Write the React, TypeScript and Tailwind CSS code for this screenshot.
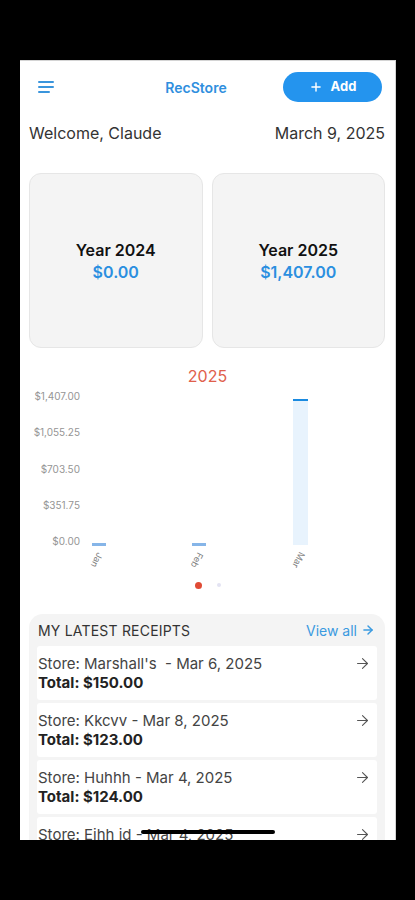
import React from 'react';
import { ArrowRight, Plus } from 'lucide-react';

const yLabels = ['$1,407.00', '$1,055.25', '$703.50', '$351.75', '$0.00'];

const months = [
  { label: 'Jan', value: 0 },
  { label: 'Feb', value: 0 },
  { label: 'Mar', value: 1407 },
];

const receipts = [
  { store: "Marshall's ", date: 'Mar 6, 2025', total: '$150.00' },
  { store: 'Kkcvv', date: 'Mar 8, 2025', total: '$123.00' },
  { store: 'Huhhh', date: 'Mar 4, 2025', total: '$124.00' },
  { store: 'Ejhh jd', date: 'Mar 4, 2025', total: '$98.00' },
];

const MenuIcon = () => (
  <svg width="16" height="14" viewBox="0 0 16 14" fill="none" stroke="#3a95dc" strokeWidth="2" strokeLinecap="round">
    <line x1="1" y1="2" x2="15" y2="2" />
    <line x1="1" y1="7" x2="15" y2="7" />
    <line x1="1" y1="12" x2="11" y2="12" />
  </svg>
);

const YearCard = ({ year, amount }: { year: string; amount: string }) => (
  <div className="flex-1 h-[175px] bg-[#f4f4f4] border border-[#e6e6e6] rounded-[12px] flex flex-col items-center justify-center">
    <div className="text-[16px] leading-[22px] font-semibold text-[#111]">Year {year}</div>
    <div className="text-[16px] leading-[22px] font-semibold text-[#2b8fe0]">{amount}</div>
  </div>
);

export default function App() {
  const max = 1407;
  return (
    <div className="w-[415px] h-[900px] bg-black pt-[60px] pl-[20px]" style={{ fontFamily: 'Inter, "Noto Sans", sans-serif' }}>
      <div className="relative w-[376px] h-[780px] bg-white overflow-hidden border-t border-r border-[#d4d4d4]">
        {/* header */}
        <div className="flex items-center h-[30px] mt-[11px] pl-[18px] pr-[13px]">
          <div className="w-[71px] flex items-center">
            <MenuIcon />
          </div>
          <div className="flex-1 text-center text-[14px] font-semibold text-[#2f8fde]">RecStore</div>
          <button className="w-[99px] h-[30px] rounded-full bg-[#2494ee] flex items-center justify-center gap-[8px] text-white text-[13px] font-bold">
            <Plus size={14} strokeWidth={2.5} />
            Add
          </button>
        </div>

        <div className="flex justify-between mt-[19px] pl-[9px] pr-[10px] text-[16px] leading-[24px] text-[#333]">
          <span>Welcome, Claude</span>
          <span>March 9, 2025</span>
        </div>

        <div className="flex gap-[9px] mt-[28px] pl-[9px] pr-[10px]">
          <YearCard year="2024" amount="$0.00" />
          <YearCard year="2025" amount="$1,407.00" />
        </div>

        <div className="mt-[16px] text-center text-[16px] leading-[24px] text-[#e0604c]">2025</div>

        {/* chart */}
        <div className="flex items-start mt-[1px] pl-[9px] pr-[10px]">
          <div className="w-[51px] h-[159px] flex flex-col justify-between text-right text-[10px] leading-[14px] text-[#959595]">
            {yLabels.map((l) => (
              <span key={l}>{l}</span>
            ))}
          </div>
          <div className="flex-1 ml-[4px]">
            <div className="grid grid-cols-3 pt-[10px]">
              {months.map((m) => (
                <div key={m.label} className="h-[146px] flex items-end pl-[8px]">
                  {m.value > 0 ? (
                    <div
                      className="w-[15px] bg-[#e8f3fd] border-t-2 border-[#1a8ae0]"
                      style={{ height: `${(m.value / max) * 146}px` }}
                    />
                  ) : (
                    <div className="w-[14px] h-[3px] bg-[#86b5e8] mb-[-1px]" />
                  )}
                </div>
              ))}
            </div>
            <div className="grid grid-cols-3 h-[26px]">
              {months.map((m) => (
                <div key={m.label} className="relative">
                  <span className="absolute left-[5px] top-[10px] text-[9px] leading-[10px] text-[#808080] rotate-[117deg]">
                    {m.label}
                  </span>
                </div>
              ))}
            </div>
          </div>
        </div>

        <div className="flex justify-center items-center gap-[15px] mt-[10px] h-[8px]">
          <span className="w-[7px] h-[7px] rounded-full bg-[#e04b35]" />
          <span className="w-[4px] h-[4px] rounded-full bg-[#e3e3f3]" />
        </div>

        {/* receipts */}
        <div className="mt-[25px] ml-[9px] mr-[10px] bg-[#f4f4f4] rounded-[14px] pb-[8px]">
          <div className="flex items-center justify-between h-[32px] pl-[9px] pr-[10px]">
            <span className="text-[14px] text-[#333] uppercase tracking-[0.2px]">My latest receipts</span>
            <span className="flex items-center gap-[4px] text-[14px] text-[#3a9ae0]">
              View all
              <ArrowRight size={14} strokeWidth={2.5} />
            </span>
          </div>
          <div className="flex flex-col gap-[3px] px-[8px]">
            {receipts.map((r) => (
              <div key={r.store} className="h-[54px] bg-white rounded-[3px] flex justify-between pl-[1px] pr-[6px] pt-[8px]">
                <div className="text-[15px] leading-[19px]">
                  <div className="text-[#444] whitespace-pre">
                    Store: {r.store} - {r.date}
                  </div>
                  <div className="font-bold text-[#222]">Total: {r.total}</div>
                </div>
                <ArrowRight size={17} strokeWidth={1.5} className="text-[#555] mt-[1px]" />
              </div>
            ))}
          </div>
        </div>

        {/* home indicator */}
        <div className="absolute left-[121px] top-[769px] w-[134px] h-[4px] rounded-full bg-black" />
      </div>
    </div>
  );
}
